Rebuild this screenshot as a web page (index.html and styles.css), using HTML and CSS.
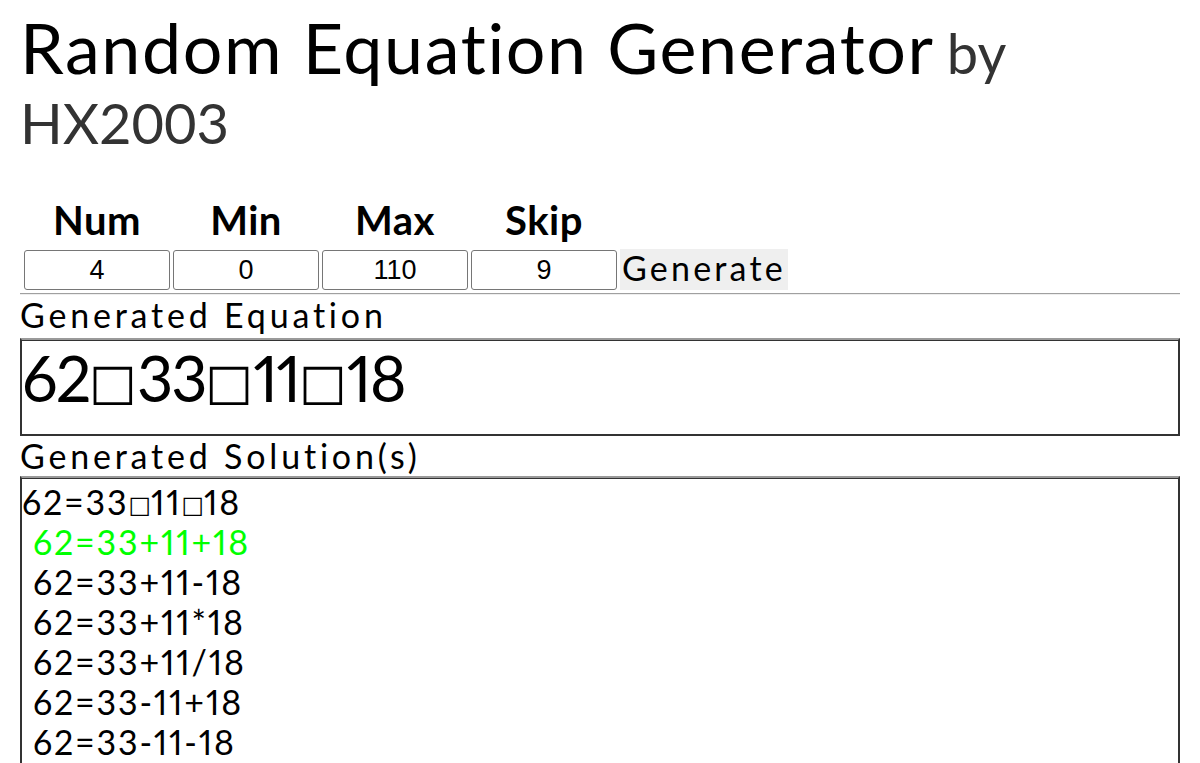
FILE: index.html
```html
<!DOCTYPE html>
<html lang="en">
<head>
<meta charset="utf-8">
<title>Random Equation Generator</title>
<link rel="stylesheet" href="styles.css">
</head>
<body>
<h1 class="title">Random Equation Generator <span class="by">by HX2003</span></h1>
<div class="controls">
  <div class="head">Num</div>
  <div class="head">Min</div>
  <div class="head">Max</div>
  <div class="head">Skip</div>
  <div class="head-empty"></div>
  <input class="field" type="text" value="4">
  <input class="field" type="text" value="0">
  <input class="field" type="text" value="110">
  <input class="field" type="text" value="9">
  <button class="gen" type="button">Generate</button>
</div>
<hr class="rule">
<div class="label">Generated Equation</div>
<div class="eq-box">62<span class="sq">□</span>33<span class="sq">□</span>11<span class="sq">□</span>18</div>
<div class="label">Generated Solution(s)</div>
<div class="sol-box">
  <div class="sol first">62=33<span class="sq">□</span>11<span class="sq">□</span>18</div>
  <div class="sol ok">62=33+11+18</div>
  <div class="sol">62=33+11-18</div>
  <div class="sol">62=33+11*18</div>
  <div class="sol">62=33+11/18</div>
  <div class="sol">62=33-11+18</div>
  <div class="sol">62=33-11-18</div>
  <div class="sol">62=33-11*18</div>
  <div class="sol">62=33-11/18</div>
  <div class="sol">62=33*11+18</div>
  <div class="sol">62=33*11-18</div>
  <div class="sol">62=33*11*18</div>
  <div class="sol">62=33*11/18</div>
  <div class="sol">62=33/11+18</div>
  <div class="sol">62=33/11-18</div>
  <div class="sol">62=33/11*18</div>
  <div class="sol">62=33/11/18</div>
</div>
</body>
</html>
```
FILE: styles.css
```css
html, body {
  background: #ffffff;
}
body {
  margin: 0 20px;
  font-family: "Lato", "Noto Sans", sans-serif;
  color: #000000;
}
.title {
  margin: 12px 0 45px;
  font-size: 70px;
  line-height: 70px;
  font-weight: 400;
  letter-spacing: 1.6px;
}
.by {
  margin-left: -6px;
  font-size: 56px;
  line-height: 56px;
  letter-spacing: 0;
  color: #333333;
}
.controls {
  display: grid;
  grid-template-columns: repeat(4, 146px) auto;
  column-gap: 3px;
  row-gap: 6px;
  padding-left: 4px;
  align-items: end;
  justify-content: start;
}
.head {
  font-size: 40px;
  line-height: 46px;
  font-weight: 700;
  letter-spacing: 0.5px;
  text-align: center;
}
.field {
  box-sizing: border-box;
  width: 146px;
  height: 40px;
  margin: 0;
  padding: 0 4px;
  border: 1px solid #767676;
  border-radius: 3px;
  background: #ffffff;
  font-family: "Liberation Sans", Arial, sans-serif;
  font-size: 27px;
  text-align: center;
  color: #000000;
}
.gen {
  box-sizing: border-box;
  height: 41px;
  margin: 0;
  padding: 0 2px 4px;
  border: none;
  background: #efefef;
  font-family: "Lato", "Noto Sans", sans-serif;
  font-size: 34px;
  line-height: 37px;
  letter-spacing: 3.2px;
  color: #000000;
}
.rule {
  margin: 3px 0 0;
  height: 0;
  border: none;
  border-top: 1px solid #a0a0a0;
  border-bottom: 1px solid #eeeeee;
}
.label {
  margin-top: 0;
  font-size: 34px;
  line-height: 40px;
  letter-spacing: 3.8px;
}
.label + .eq-box {
  margin-top: 3px;
}
.eq-box {
  box-sizing: border-box;
  height: 98px;
  border: 2px solid #333333;
  border-top-color: #9a9a9a;
  box-shadow: inset 0 1px 0 #333333;
  font-size: 63px;
  line-height: 76px;
  letter-spacing: -2px;
  white-space: nowrap;
  font-variant-numeric: proportional-nums;
}
.sq {
  font-family: "DejaVu Sans", sans-serif;
  font-size: 0.8em;
  line-height: 0;
  font-weight: 400;
  letter-spacing: 0;
  vertical-align: 0.05em;
}
.sol-box {
  border: 2px solid #333333;
  border-top-color: #9a9a9a;
  box-shadow: inset 0 1px 0 #333333;
  padding-top: 4px;
  font-size: 34px;
  line-height: 40px;
  letter-spacing: 1.8px;
  font-variant-numeric: proportional-nums;
}
.sol-box .sq {
  font-size: 0.7em;
  vertical-align: 0.08em;
}
.sol {
  padding-left: 11px;
}
.sol.first {
  padding-left: 0;
}
.sol.ok {
  color: #00ff00;
}
```
